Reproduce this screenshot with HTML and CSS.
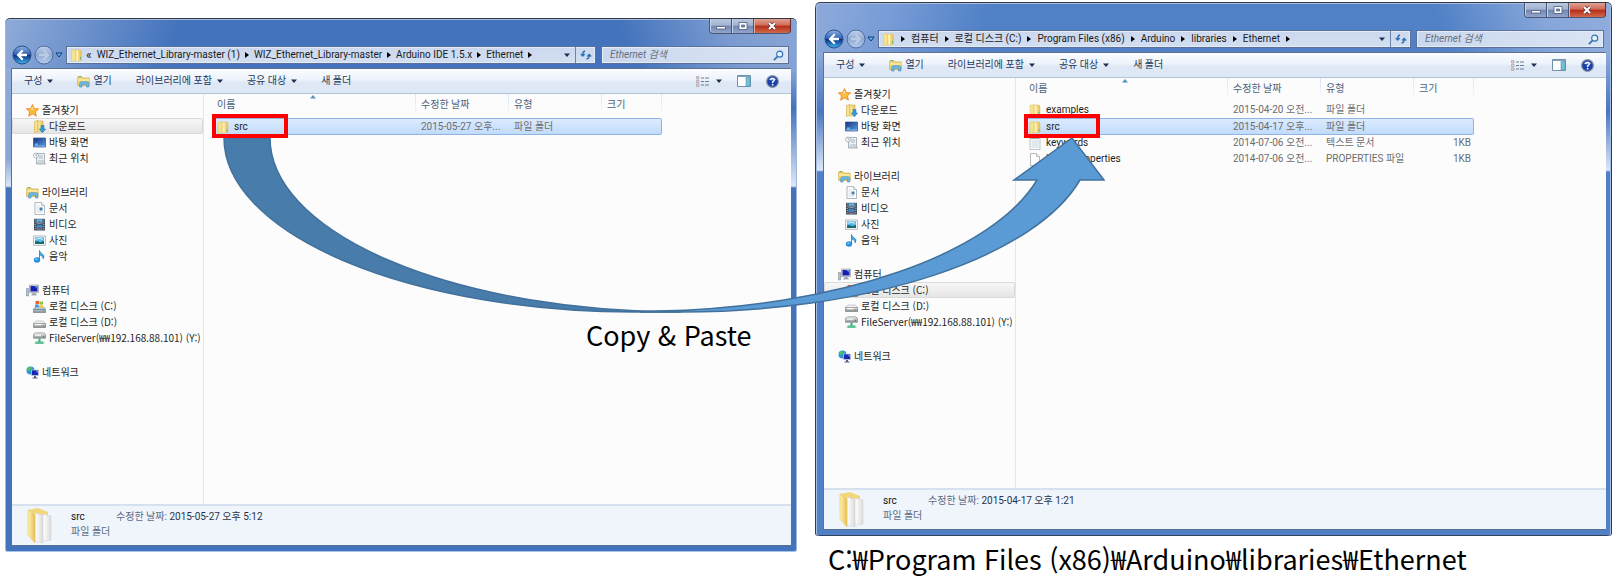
FILE: index.html
```
<!DOCTYPE html>
<html lang="ko">
<head>
<meta charset="utf-8">
<title>Copy &amp; Paste</title>
<link rel="stylesheet" href="styles.css">
</head>
<body>
<svg class="defs" width="0" height="0" aria-hidden="true">
  <defs>
    <linearGradient id="g-folder" x1="0" x2="1"><stop offset="0" stop-color="#fff2b0"/><stop offset="1" stop-color="#e5bf55"/></linearGradient>
    <linearGradient id="g-back" x1="0" x2="0" y1="0" y2="1"><stop offset="0" stop-color="#8fb4e4"/><stop offset=".48" stop-color="#2c5db4"/><stop offset=".52" stop-color="#0b2f88"/><stop offset="1" stop-color="#3fb8f0"/></linearGradient>
    <linearGradient id="g-fwd" x1="0" x2="0" y1="0" y2="1"><stop offset="0" stop-color="#c3d2ec"/><stop offset=".5" stop-color="#8ea9d2"/><stop offset="1" stop-color="#b4cbec"/></linearGradient>
    <linearGradient id="g-screen" x1="0" x2="1" y1="0" y2="1"><stop offset="0" stop-color="#16327c"/><stop offset="1" stop-color="#5b9be8"/></linearGradient>
    <linearGradient id="g-disk" x1="0" x2="0" y1="0" y2="1"><stop offset="0" stop-color="#f2f2f2"/><stop offset="1" stop-color="#8b8f92"/></linearGradient>
    <linearGradient id="g-paper" x1="0" x2="1"><stop offset="0" stop-color="#fff"/><stop offset="1" stop-color="#dcdcdc"/></linearGradient>
  </defs>
  <symbol id="folder" viewBox="0 0 12 13"><path d="M1 1.500 5 .5v11L1 12.500z" fill="#f8e391" stroke="#dcbf62" stroke-width=".5"/><path d="M5 1h5l1 1v9.500l-6 .5z" fill="url(#g-folder)" stroke="#dcbf62" stroke-width=".5"/><path d="M7 2v9.500" stroke="#fff6cc"/><path d="M10 8v2.500" stroke="#58a87f" stroke-width=".8"/></symbol>
  <symbol id="star" viewBox="0 0 13 13"><path d="m6.500.5 1.800 4 4.400.4-3.300 2.900 1 4.400-3.900-2.300-3.900 2.300 1-4.400L.3 4.900l4.400-.4z" fill="#fdbb3a" stroke="#e8822a" stroke-width=".8"/><path d="m6.500 2.500 1 3-3-.1z" fill="#ffe69a"/></symbol>
  <symbol id="download" viewBox="0 0 13 13"><path d="M1.500 1.500 5 .5v11l-3.500 1z" fill="#f8e391" stroke="#cfa93f" stroke-width=".6"/><path d="M5 1h5v11H5z" fill="url(#g-folder)" stroke="#d3ae4a" stroke-width=".6"/><path d="M8 5.500h3V9h1.700l-3.200 3.700L6.300 9H8z" fill="#2f9be0" stroke="#1c6fb5" stroke-width=".5"/></symbol>
  <symbol id="desktop" viewBox="0 0 13 13"><path d="M.5 2h12v9H.5z" fill="url(#g-screen)" stroke="#31508e" stroke-width=".7"/><path d="M1 10h11" stroke="#8cb9ee"/><path d="M2 7.500h3v2H2z" fill="#4fc2e8"/></symbol>
  <symbol id="recent" viewBox="0 0 13 13"><path d="M3.500 1.500h8v9l1 1.500h-9z" fill="#eef2f5" stroke="#8b979f" stroke-width=".7"/><path d="M6 4h4M6 6h4M5 9h6M4 11h8" stroke="#9fb0ba" stroke-width=".9"/><circle cx="3" cy="3.500" r="2.500" fill="#fff" stroke="#8d9ba5" stroke-width=".7"/><path d="M3 2v1.600h1.200" fill="none" stroke="#5a6b77" stroke-width=".6"/></symbol>
  <symbol id="library" viewBox="0 0 13 13"><path d="M.7 2h4l1 1h6.500v7.500H.7z" fill="#f4d978" stroke="#cfa848" stroke-width=".7"/><path d="M1.500 1.500h3" stroke="#75b957"/><path d="M1 5h11.500" stroke="#fff3bd"/><path d="M2.700 12V8.500q0-1.800 1.800-1.800h5.500q1.800 0 1.800 1.800V12h-2.300V9.300H5V12z" fill="#6dbbe5" stroke="#3b89bd" stroke-width=".6"/></symbol>
  <symbol id="doc" viewBox="0 0 13 13"><path d="M2 .6h6.500l3 3v8.900H2z" fill="#fff" stroke="#8d99a3" stroke-width=".7"/><path d="M8.500.6v3h3" fill="#dfe6ec" stroke="#8d99a3" stroke-width=".5"/><path d="M3.500 4h3M3.500 6h2M3.500 8h2M3.500 10h6" stroke="#b7c6d3" stroke-width=".7"/><path d="M6.500 5.500h3v3h-3z" fill="#3a82b8"/></symbol>
  <symbol id="video" viewBox="0 0 13 13"><path d="M1 .8h11v11.700H1z" fill="#3b4650"/><path d="M3.500 1.200h6v5h-6z" fill="#5fb0e4"/><path d="M3.500 7h6v5h-6z" fill="#3c8bc8"/><path d="M3.500 5h2l1-1.500 1 1.500h2M3.500 11h2l1-2 1 2h2" stroke="#9c4a35" fill="none"/><path d="M2.200 1.500v10.500M10.800 1.500v10.500" stroke="#dde5ea" stroke-dasharray="1 1.200" stroke-width=".9"/></symbol>
  <symbol id="picture" viewBox="0 0 13 13"><path d="M.6 2h11.800v9.300H.6z" fill="#fff" stroke="#8f9aa3" stroke-width=".7"/><path d="M2 3.300h9V10H2z" fill="#58b8ec"/><path d="M2 10V7.500l2.500-.5L7 8.300l4-1.300V10z" fill="#17696c"/><path d="M2.500 5.500 6 4.300l4 1" stroke="#d8f1fb" fill="none"/></symbol>
  <symbol id="music" viewBox="0 0 13 13"><ellipse cx="4" cy="10" rx="3.200" ry="2.700" fill="#2792dd"/><ellipse cx="3.400" cy="9.300" rx="1.300" ry=".8" fill="#8ad4f7"/><path d="M6.500 10V.5q.3 2.200 2.600 3.300 3 1.500 1.200 5 0-3-3.100-3.600" fill="#4bb0ea" stroke="#1e7fca" stroke-width=".8"/></symbol>
  <symbol id="computer" viewBox="0 0 13 13"><path d="M.5 4.500h2V12h-2z" fill="#b9c3cb" stroke="#6e7c87" stroke-width=".5"/><path d="M3.500 1h9v7.700h-9z" fill="#d5dbe0" stroke="#8a949d" stroke-width=".6"/><path d="M4.500 2h7v5.500h-7z" fill="#1620b0"/><path d="M8 2h3.500v3z" fill="#5b86ec"/><path d="M6.500 9h3l1.500 2.500H5z" fill="#a3abb3"/></symbol>
  <symbol id="disk-c" viewBox="0 0 13 13"><path d="M2.500 7h8l2 2v3.500H.5V9z" fill="url(#g-disk)" stroke="#66717b" stroke-width=".6"/><path d="M1 9.300h11" stroke="#4e87ac"/><path d="M2.500 1.200Q4.500.2 6 1.200v3Q4.300 3.300 2.500 4.200z" fill="#ee5b2b"/><path d="M6.500 1.300q1.700.9 3.500 0v3q-1.700.9-3.500 0z" fill="#8bc63f"/><path d="M2 4.700q2-.9 3.700 0v2.800q-1.700-.9-3.700 0z" fill="#3d95dc"/><path d="M6.200 4.800q1.700.9 3.500 0v2.800q-1.700.9-3.500 0z" fill="#fcc62f"/><circle cx="10.500" cy="11" r=".8" fill="#47c24e"/></symbol>
  <symbol id="disk" viewBox="0 0 13 13"><path d="M3 5h7l2.500 2.500v4H.5v-4z" fill="#f1f1f1" stroke="#9b9fa2" stroke-width=".5"/><path d="M.7 7.500h11.800v3.800H.7z" fill="url(#g-disk)" stroke="#6c7073" stroke-width=".6"/><path d="M2 8.500h6" stroke="#fff"/><circle cx="10.500" cy="9.700" r=".8" fill="#3fb648"/></symbol>
  <symbol id="netdisk" viewBox="0 0 13 13"><path d="M2.500.8h8l2 1.500v4H.5v-4z" fill="url(#g-disk)" stroke="#777d82" stroke-width=".6"/><path d="M2 3.200h6" stroke="#fff"/><circle cx="10.500" cy="4.500" r=".8" fill="#2d9a36"/><path d="M5.500 6.500h2v3h3V12h-8V9.500h3z" fill="#35b27c"/><path d="M1 11h11" stroke="#a9d8c6" stroke-width=".8"/></symbol>
  <symbol id="network" viewBox="0 0 13 13"><circle cx="4.500" cy="4.500" r="4" fill="#2b92dc"/><path d="M2 1.500q3-1 4 .5L4 4.500 1 5zM4 6l3-.5v2.500z" fill="#51c35a"/><path d="M5.500 4h7v5.500h-7z" fill="#1825b5" stroke="#c5ced7" stroke-width=".7"/><path d="M9 4.300h3v3z" fill="#5b86ec"/><path d="M8 10h2v1.500h1.500v1h-5v-1H8z" fill="#55627c"/></symbol>
  <symbol id="text-file" viewBox="0 0 12 13"><path d="M1 1h10v11.500H1z" fill="#f8fbfc" stroke="#a3adb3" stroke-width=".7"/><path d="M2.500 4h7M2.500 6h7M2.500 8h7M2.500 10h7" stroke="#bad0d8" stroke-width=".8"/><path d="M2 1.500h8" stroke="#98a5ad"/></symbol>
  <symbol id="blank-file" viewBox="0 0 12 13"><path d="M1.500.6h6l3 3v8.900h-9z" fill="#fff" stroke="#979da1" stroke-width=".7"/><path d="M7.500.6v3h3" fill="#eee" stroke="#979da1" stroke-width=".6"/></symbol>
  <symbol id="big-folder" viewBox="0 0 28 36"><path d="M2 2 12 0l10 4v26l-13 3z" fill="#f1d77c"/><path d="m9 5 8 2v28l-8-2z" fill="url(#g-paper)" stroke="#cfcfcf" stroke-width=".5"/><path d="m17 6 8 2v24l-6 1-2-1z" fill="url(#g-paper)" stroke="#cfcfcf" stroke-width=".5"/><path d="m2 2 7 5v28l-7-8z" fill="url(#g-folder)" stroke="#e3c25e" stroke-width=".5"/></symbol>
  <symbol id="back" viewBox="0 0 20 20"><circle cx="10" cy="10" r="9" fill="url(#g-back)" stroke="#254b87"/><path d="M10 4.500 4.500 10l5.500 5.500 1.500-1.500-2.500-2.700h6V8.700H9L11.500 6z" fill="#fff"/></symbol>
  <symbol id="forward" viewBox="0 0 20 20"><circle cx="10" cy="10" r="9" fill="url(#g-fwd)" stroke="#4d6da2"/><path d="m10 4.500 5.500 5.500-5.500 5.500L8.500 14l2.500-2.700H5V8.700h6L8.500 6z" fill="#bccbe4"/></symbol>
  <symbol id="history" viewBox="0 0 8 6"><path d="M1 1h6L4 5z" fill="#6db8ee" stroke="#0f3878"/></symbol>
  <symbol id="caret" viewBox="0 0 6 4"><path d="M0 .5h6L3 4z" fill="currentColor"/></symbol>
  <symbol id="crumb" viewBox="0 0 4 6"><path d="M0 0v6l4-3z" fill="#000"/></symbol>
  <symbol id="refresh" viewBox="0 0 12 12"><path d="M5 2Q2.500 2.500 2.700 6M.8 5l1.900 2 2-2M6.500 10q3-.5 2.700-4M7.200 7.500l2-2 2 2" fill="none" stroke="#2d71b5" stroke-width="1.300"/></symbol>
  <symbol id="magnifier" viewBox="0 0 12 12"><circle cx="7.300" cy="4.500" r="3.300" fill="#e9f3fd" stroke="#2e70b4" stroke-width="1.200"/><path d="m5 7-4 4" stroke="#2e70b4" stroke-width="1.800"/></symbol>
  <symbol id="view" viewBox="0 0 13 11"><path d="M.5.500h2.500v2.500H.5zM.5 4.300h2.500v2.500H.5zM.5 8h2.500v2.500H.5z" fill="#efc9c2" stroke="#a8a4ae" stroke-width=".7"/><path d="M5 2h3M9 2h4M5 5.500h3M9 5.500h4M5 9h3M9 9h4" stroke="#6d7f95"/></symbol>
  <symbol id="pane" viewBox="0 0 14 12"><path d="M.5.500h13v11H.5z" fill="#fff" stroke="#6f93ab"/><path d="M1 1.500h12" stroke="#7fa3ba"/><path d="M9 2.500h4V11H9z" fill="#74c2d9" stroke="#4a91ad" stroke-width=".6"/></symbol>
  <symbol id="help" viewBox="0 0 13 13"><circle cx="6.500" cy="6.500" r="5.900" fill="#1b3fa8" stroke="#8f98a5" stroke-width="1.200"/><path d="M2.500 4.500q4-4 8 0-4 2-8 0z" fill="#7f9fe4"/><path d="M4.700 5Q4.800 3.400 6.500 3.400T8.300 5Q8.300 6 6.600 7v1" fill="none" stroke="#fff" stroke-width="1.400"/><circle cx="6.600" cy="9.700" r=".9" fill="#fff"/></symbol>
  <symbol id="minimize" viewBox="0 0 12 10"><path d="M1.500 5.500h9v2.500h-9z" fill="#fff" stroke="#49587a" stroke-width=".8"/></symbol>
  <symbol id="maximize" viewBox="0 0 12 10"><path d="M2 1.500h8v7H2z" fill="#fff" stroke="#49587a" stroke-width=".8"/><path d="M4.500 4h3v2h-3z" fill="#7d8fb4" stroke="#49587a" stroke-width=".7"/></symbol>
  <symbol id="close" viewBox="0 0 12 10"><path d="m3 2 6 6M9 2 3 8" stroke="#5c3034" stroke-width="3.200"/><path d="m3 2 6 6M9 2 3 8" stroke="#fff" stroke-width="2"/></symbol>
</svg>

<main class="scene">
  <div class="column column-source">
    <section class="window window-source" aria-label="Ethernet">
      <div class="controls">
        <button class="control" aria-label="최소화"><svg><use href="#minimize"/></svg></button><button class="control" aria-label="최대화"><svg><use href="#maximize"/></svg></button><button class="control control-close" aria-label="닫기"><svg><use href="#close"/></svg></button>
      </div>
      <div class="navbar">
        <div class="history"><button class="round" aria-label="뒤로"><svg><use href="#back"/></svg></button><button class="round" aria-label="앞으로"><svg><use href="#forward"/></svg></button><button class="recent" aria-label="최근 페이지"><svg><use href="#history"/></svg></button></div>
        <nav class="address" aria-label="주소">
          <svg class="icon"><use href="#folder"/></svg>
          <span class="overflow">«</span>
          <a href="#">WIZ_Ethernet_Library-master (1)</a><svg class="crumb"><use href="#crumb"/></svg>
          <a href="#">WIZ_Ethernet_Library-master</a><svg class="crumb"><use href="#crumb"/></svg>
          <a href="#">Arduino IDE 1.5.x</a><svg class="crumb"><use href="#crumb"/></svg>
          <a href="#">Ethernet</a><svg class="crumb"><use href="#crumb"/></svg>
          <button class="drop" aria-label="이전 위치"><svg class="caret"><use href="#caret"/></svg></button>
          <button class="refresh" aria-label="새로 고침"><svg><use href="#refresh"/></svg></button>
        </nav>
        <label class="search"><input type="text" placeholder="Ethernet 검색" aria-label="Ethernet 검색"><svg><use href="#magnifier"/></svg></label>
      </div>
      <div class="content">
        <div class="toolbar">
          <button>구성<svg class="caret"><use href="#caret"/></svg></button>
          <button><svg class="icon"><use href="#library"/></svg>열기</button>
          <button>라이브러리에 포함<svg class="caret"><use href="#caret"/></svg></button>
          <button>공유 대상<svg class="caret"><use href="#caret"/></svg></button>
          <button>새 폴더</button>
          <span class="tools"><button aria-label="보기"><svg class="view"><use href="#view"/></svg><svg class="caret"><use href="#caret"/></svg></button><button aria-label="미리 보기 창"><svg class="pane"><use href="#pane"/></svg></button><button aria-label="도움말"><svg class="help"><use href="#help"/></svg></button></span>
        </div>
        <div class="body">
          <nav class="tree" aria-label="탐색 창">
            <ul><li><a href="#"><svg class="icon"><use href="#star"/></svg>즐겨찾기</a></li>
              <li class="child current"><a href="#"><svg class="icon"><use href="#download"/></svg>다운로드</a></li>
              <li class="child"><a href="#"><svg class="icon"><use href="#desktop"/></svg>바탕 화면</a></li>
              <li class="child"><a href="#"><svg class="icon"><use href="#recent"/></svg>최근 위치</a></li></ul>
            <ul><li><a href="#"><svg class="icon"><use href="#library"/></svg>라이브러리</a></li>
              <li class="child"><a href="#"><svg class="icon"><use href="#doc"/></svg>문서</a></li>
              <li class="child"><a href="#"><svg class="icon"><use href="#video"/></svg>비디오</a></li>
              <li class="child"><a href="#"><svg class="icon"><use href="#picture"/></svg>사진</a></li>
              <li class="child"><a href="#"><svg class="icon"><use href="#music"/></svg>음악</a></li></ul>
            <ul><li><a href="#"><svg class="icon"><use href="#computer"/></svg>컴퓨터</a></li>
              <li class="child"><a href="#"><svg class="icon"><use href="#disk-c"/></svg>로컬 디스크 (C:)</a></li>
              <li class="child"><a href="#"><svg class="icon"><use href="#disk"/></svg>로컬 디스크 (D:)</a></li>
              <li class="child"><a href="#"><svg class="icon"><use href="#netdisk"/></svg>FileServer(₩₩192.168.88.101) (Y:)</a></li></ul>
            <ul><li><a href="#"><svg class="icon"><use href="#network"/></svg>네트워크</a></li></ul>
          </nav>
          <div class="files">
            <table>
              <colgroup><col class="col-name"><col class="col-meta"><col class="col-meta"><col class="col-size"></colgroup>
              <thead><tr><th class="sorted">이름<svg class="caret"><use href="#caret"/></svg></th><th>수정한 날짜</th><th>유형</th><th>크기</th></tr></thead>
              <tbody>
                <tr class="selected"><td class="marked"><svg class="icon"><use href="#folder"/></svg>src</td><td>2015-05-27 오후...</td><td>파일 폴더</td><td></td></tr>
              </tbody>
            </table>
          </div>
        </div>
        <footer class="details">
          <svg class="preview"><use href="#big-folder"/></svg>
          <div class="facts"><p><b>src</b><span>수정한 날짜:</span> 2015-05-27 오후 5:12</p><p class="kind">파일 폴더</p></div>
        </footer>
      </div>
    </section>
  </div>

  <div class="column">
    <section class="window window-target" aria-label="Ethernet">
      <div class="controls">
        <button class="control" aria-label="최소화"><svg><use href="#minimize"/></svg></button><button class="control" aria-label="최대화"><svg><use href="#maximize"/></svg></button><button class="control control-close" aria-label="닫기"><svg><use href="#close"/></svg></button>
      </div>
      <div class="navbar">
        <div class="history"><button class="round" aria-label="뒤로"><svg><use href="#back"/></svg></button><button class="round" aria-label="앞으로"><svg><use href="#forward"/></svg></button><button class="recent" aria-label="최근 페이지"><svg><use href="#history"/></svg></button></div>
        <nav class="address" aria-label="주소">
          <svg class="icon"><use href="#folder"/></svg><svg class="crumb"><use href="#crumb"/></svg>
          <a href="#">컴퓨터</a><svg class="crumb"><use href="#crumb"/></svg>
          <a href="#">로컬 디스크 (C:)</a><svg class="crumb"><use href="#crumb"/></svg>
          <a href="#">Program Files (x86)</a><svg class="crumb"><use href="#crumb"/></svg>
          <a href="#">Arduino</a><svg class="crumb"><use href="#crumb"/></svg>
          <a href="#">libraries</a><svg class="crumb"><use href="#crumb"/></svg>
          <a href="#">Ethernet</a><svg class="crumb"><use href="#crumb"/></svg>
          <button class="drop" aria-label="이전 위치"><svg class="caret"><use href="#caret"/></svg></button>
          <button class="refresh" aria-label="새로 고침"><svg><use href="#refresh"/></svg></button>
        </nav>
        <label class="search"><input type="text" placeholder="Ethernet 검색" aria-label="Ethernet 검색"><svg><use href="#magnifier"/></svg></label>
      </div>
      <div class="content">
        <div class="toolbar">
          <button>구성<svg class="caret"><use href="#caret"/></svg></button>
          <button><svg class="icon"><use href="#library"/></svg>열기</button>
          <button>라이브러리에 포함<svg class="caret"><use href="#caret"/></svg></button>
          <button>공유 대상<svg class="caret"><use href="#caret"/></svg></button>
          <button>새 폴더</button>
          <span class="tools"><button aria-label="보기"><svg class="view"><use href="#view"/></svg><svg class="caret"><use href="#caret"/></svg></button><button aria-label="미리 보기 창"><svg class="pane"><use href="#pane"/></svg></button><button aria-label="도움말"><svg class="help"><use href="#help"/></svg></button></span>
        </div>
        <div class="body">
          <nav class="tree" aria-label="탐색 창">
            <ul><li><a href="#"><svg class="icon"><use href="#star"/></svg>즐겨찾기</a></li>
              <li class="child"><a href="#"><svg class="icon"><use href="#download"/></svg>다운로드</a></li>
              <li class="child"><a href="#"><svg class="icon"><use href="#desktop"/></svg>바탕 화면</a></li>
              <li class="child"><a href="#"><svg class="icon"><use href="#recent"/></svg>최근 위치</a></li></ul>
            <ul><li><a href="#"><svg class="icon"><use href="#library"/></svg>라이브러리</a></li>
              <li class="child"><a href="#"><svg class="icon"><use href="#doc"/></svg>문서</a></li>
              <li class="child"><a href="#"><svg class="icon"><use href="#video"/></svg>비디오</a></li>
              <li class="child"><a href="#"><svg class="icon"><use href="#picture"/></svg>사진</a></li>
              <li class="child"><a href="#"><svg class="icon"><use href="#music"/></svg>음악</a></li></ul>
            <ul><li><a href="#"><svg class="icon"><use href="#computer"/></svg>컴퓨터</a></li>
              <li class="child current"><a href="#"><svg class="icon"><use href="#disk-c"/></svg>로컬 디스크 (C:)</a></li>
              <li class="child"><a href="#"><svg class="icon"><use href="#disk"/></svg>로컬 디스크 (D:)</a></li>
              <li class="child"><a href="#"><svg class="icon"><use href="#netdisk"/></svg>FileServer(₩₩192.168.88.101) (Y:)</a></li></ul>
            <ul><li><a href="#"><svg class="icon"><use href="#network"/></svg>네트워크</a></li></ul>
          </nav>
          <div class="files">
            <table>
              <colgroup><col class="col-name"><col class="col-meta"><col class="col-meta"><col class="col-size"></colgroup>
              <thead><tr><th class="sorted">이름<svg class="caret"><use href="#caret"/></svg></th><th>수정한 날짜</th><th>유형</th><th>크기</th></tr></thead>
              <tbody>
                <tr><td><svg class="icon"><use href="#folder"/></svg>examples</td><td>2015-04-20 오전...</td><td>파일 폴더</td><td></td></tr>
                <tr class="selected"><td class="marked"><svg class="icon"><use href="#folder"/></svg>src</td><td>2015-04-17 오후...</td><td>파일 폴더</td><td></td></tr>
                <tr><td><svg class="icon"><use href="#text-file"/></svg>keywords</td><td>2014-07-06 오전...</td><td>텍스트 문서</td><td class="size">1KB</td></tr>
                <tr><td><svg class="icon"><use href="#blank-file"/></svg>library.properties</td><td>2014-07-06 오전...</td><td>PROPERTIES 파일</td><td class="size">1KB</td></tr>
              </tbody>
            </table>
          </div>
        </div>
        <footer class="details">
          <svg class="preview"><use href="#big-folder"/></svg>
          <div class="facts"><p><b>src</b><span>수정한 날짜:</span> 2015-04-17 오후 1:21</p><p class="kind">파일 폴더</p></div>
        </footer>
      </div>
    </section>
    <p class="caption path">C:₩Program Files (x86)₩Arduino₩libraries₩Ethernet</p>
  </div>

  <svg class="arrow" viewBox="0 0 1612 585" preserveAspectRatio="none" aria-hidden="true">
    <path class="arrow-head" d="M640 312H681A411 174 0 0 0 1080 180H1104L1072 138 1014 180H1037A411 174 0 0 1 658 311Z"/>
    <path class="arrow-tail" d="M224 138A411 174 0 0 0 635 312H681A411 174 0 0 1 270 138Z"/>
  </svg>
  <p class="caption action">Copy &amp; Paste</p>
</main>
</body>
</html>
```
FILE: styles.css
```
* { box-sizing: border-box; }

body {
  margin: 0;
  background: #fff;
  color: #1e1e1e;
  font: 10px/16px Roboto, "Noto Sans CJK KR", sans-serif;
}

svg { display: block; flex: none; }
p, ul { margin: 0; padding: 0; list-style: none; }
a { color: inherit; text-decoration: none; }
.defs { position: absolute; }

button {
  display: flex;
  flex: none;
  align-items: center;
  padding: 0;
  border: 0;
  background: none;
  color: inherit;
  font: inherit;
}

.icon { width: 13px; height: 13px; }
.caret { width: 6px; height: 4px; color: #1d2f52; }

.scene {
  position: relative;
  display: flex;
  gap: 18px;
  min-height: 585px;
  padding-left: 5px;
  overflow: hidden;
}

.column { flex: 797 1 0; min-width: 0; padding-top: 2px; }
.column-source { flex-grow: 792; padding-top: 18px; }

/* Explorer window */
.window {
  position: relative;
  padding: 0 6px 6px;
  border-radius: 5px 5px 3px 3px;
  box-shadow: inset 0 1px #333b49, inset 0 2px #a6bde2, inset 1px 0 #9fb7df, inset -1px 0 #9fb7df, inset 0 -1px #a9c2e8;
}

.window-source {
  background:
    linear-gradient(105deg, #8fabd8 0, #6c91cc 80px, transparent 170px) 0 0 / 100% 50px no-repeat,
    linear-gradient(250deg, #88a5d5 0, #7b9bd0 70px, transparent 170px) 100% 0 / 50% 50px no-repeat,
    linear-gradient(#8eabd9 0, #87a5d6 90px, #dce7f8 118px, transparent 120px) 0 50px / 6px 120px no-repeat,
    linear-gradient(#87a5d6 0, #4373bc 40px, #dce7f8 118px, transparent 120px) 100% 50px / 6px 120px no-repeat,
    #4373bc;
}

.window-target {
  padding: 0 6px 6px 8px;
  box-shadow: inset 0 1px #333b49, inset 0 2px #a6bde2, inset 1px 0 #2e3a50, inset 2px 0 #a8bfe5, inset -1px 0 #2e3a50, inset -2px 0 #a8bfe5, inset 0 -1px #33415c;
  background:
    linear-gradient(105deg, #8faadb 0, #769bd6 80px, transparent 170px) 0 0 / 100% 50px no-repeat,
    linear-gradient(250deg, #91addd 0, #86a6da 70px, transparent 170px) 100% 0 / 50% 50px no-repeat,
    linear-gradient(#8eabd9 0, #4a76bf 60px, #dce7f8 118px, transparent 120px) 0 50px / 8px 120px no-repeat,
    linear-gradient(#8eabd9 0, #4a76bf 60px, #dce7f8 118px, transparent 120px) 100% 50px / 6px 120px no-repeat,
    #5080c6;
}

.controls {
  display: flex;
  justify-content: flex-end;
  height: 28px;
  padding-top: 1px;
}

.control {
  justify-content: center;
  width: 22px;
  height: 15px;
  border: 1px solid #465777;
  border-top: 0;
  border-right: 0;
  background: linear-gradient(#b9c7df 0, #a3b4d2 45%, #7287b0 50%, #91a6cd 100%);
  box-shadow: inset 1px 0 #c6d3e8;
}
.control:first-child { border-radius: 0 0 0 4px; }
.control svg { width: 12px; height: 10px; }
.control-close {
  width: 38px;
  border-right: 1px solid #6b2c31;
  border-radius: 0 0 4px 0;
  background: linear-gradient(#e0a193 0, #cf6a57 45%, #b32c17 50%, #d2694a 100%);
  box-shadow: inset 1px 0 #e8b1a5;
}

.navbar {
  display: flex;
  align-items: flex-start;
  gap: 5px;
  height: 22px;
  padding-right: 2px;
}

.history { display: flex; align-items: center; width: 50px; height: 18px; gap: 1px; }
.history .round svg { width: 20px; height: 20px; }
.round { margin-left: 1px; }
.recent svg { width: 8px; height: 6px; }

.address {
  display: flex;
  flex: 1;
  align-items: center;
  min-width: 0;
  height: 18px;
  padding-left: 3px;
  border: 1px solid #5b7199;
  background: linear-gradient(#cbd8ee, #d3def1);
  box-shadow: inset 0 0 0 1px #e4ecf8;
  color: #1a1a1a;
  white-space: nowrap;
}
.address .overflow { margin: 0 5px 0 3px; font-size: 12px; }
.crumb { width: 4px; height: 6px; margin: 0 6px; }
.window-source .crumb { margin: 0 5px; }
.drop { height: 16px; margin-left: auto; padding: 0 5px; }
.refresh { justify-content: center; width: 20px; height: 16px; border-left: 1px solid #6d82a8; }
.refresh svg { width: 12px; height: 12px; }

.search {
  display: flex;
  align-items: center;
  width: 188px;
  height: 18px;
  padding: 0 4px 0 8px;
  border: 1px solid #5b7199;
  background: linear-gradient(90deg, #cad7ed, #dae4f4);
  box-shadow: inset 0 0 0 1px #e4ecf8;
}
.search input {
  flex: 1;
  min-width: 0;
  padding: 0;
  border: 0;
  outline: 0;
  background: none;
  font: italic 10px/16px Roboto, "Noto Sans CJK KR", sans-serif;
}
.search input::placeholder { color: #66707e; opacity: 1; }
.search svg { width: 11px; height: 11px; }

.content {
  border: 1px solid #5c7090;
  border-width: 1px 0 1px 1px;
  background: #fcfcfc;
}

.toolbar {
  display: flex;
  align-items: center;
  height: 25px;
  padding: 0 12px;
  border-bottom: 1px solid #b3c4da;
  background: linear-gradient(#fbfdff 0, #edf3fb 45%, #dfe8f5 55%, #dde7f5 100%);
  color: #24395c;
  white-space: nowrap;
}
.toolbar > button { margin-right: 24px; }
.toolbar > button .caret { margin-left: 5px; }
.toolbar .icon { margin-right: 3px; }
.tools { display: flex; align-items: center; gap: 15px; margin-left: auto; }
.view { width: 13px; height: 11px; margin-right: 7px; }
.pane { width: 14px; height: 12px; }
.tools .help { width: 13px; height: 13px; }

.body { display: flex; min-height: 410px; }

.tree {
  width: 192px;
  padding-top: 8px;
  border-right: 1px solid #dde7f3;
  font-family: "Noto Sans CJK KR", sans-serif;
  white-space: nowrap;
}
.tree ul { margin-bottom: 18px; }
.tree a { display: flex; align-items: center; gap: 3px; height: 16px; padding-left: 14px; }
.tree .child a { padding-left: 21px; }
.tree .current a {
  border-radius: 2px;
  background: linear-gradient(#f8f8f8, #e4e4e4);
  box-shadow: inset 0 0 0 1px #dadada;
}

.files { flex: 1; min-width: 0; padding-left: 8px; }
.files table { width: 450px; border-collapse: separate; border-spacing: 0; table-layout: fixed; }
.col-name { width: 204px; }
.col-meta { width: 93px; }
.col-size { width: 60px; }
.files th, .files td {
  padding: 0 0 0 5px;
  font-weight: 400;
  text-align: left;
  white-space: nowrap;
}
.files th {
  height: 24px;
  padding-bottom: 3px;
  color: #4c607a;
  background: linear-gradient(#d8e5f3, #f4f8fc) 100% 0 / 1px 18px no-repeat;
}
.files td { height: 16px; line-height: 16px; color: #6d6d6d; }
.files td:first-child { color: #1e1e1e; }
.files td .icon { display: inline-block; width: 12px; margin-right: 5px; vertical-align: middle; }
.files .size { padding-right: 3px; text-align: right; }
.sorted { position: relative; }
.sorted .caret { position: absolute; top: 1px; left: 48%; color: #5b93b8; transform: rotate(180deg); }

.files .selected td {
  height: 17px;
  border: 1px solid #8fb3e3;
  border-width: 1px 0;
  line-height: 15px;
  background: linear-gradient(#dcebfd, #c1dbfc);
}
.files .selected td:last-child { border-right-width: 1px; border-radius: 0 2px 2px 0; }
.marked { position: relative; }
.marked::after {
  content: "";
  position: absolute;
  z-index: 3;
  top: -5px;
  left: 0;
  width: 68px;
  height: 16px;
  border: 4px solid #f00;
}

.details {
  display: flex;
  gap: 17px;
  height: 41px;
  padding: 2px 0 0 14px;
  border-top: 2px solid #d5e1ef;
  background: #f0f4fb;
  color: #25344d;
}
.facts { padding-top: 1px; }
.preview { width: 28px; height: 36px; }
.details b { display: inline-block; width: 45px; font-weight: 400; color: #111; }
.details span, .kind { color: #5a6b84; }
.details p { line-height: 15px; }

/* Annotations lying over the windows */
.arrow {
  position: absolute;
  z-index: 2;
  top: 0;
  left: 0;
  width: 100%;
  height: 585px;
  pointer-events: none;
}
.arrow path { stroke: #41719c; stroke-width: 1.5; }
.arrow-head { fill: #5b9bd5; }
.arrow-tail { fill: #487caa; }

.caption { color: #000; font: 27px/36px "Noto Sans CJK KR", sans-serif; white-space: nowrap; }
.path { padding: 5px 0 0 13px; }
.action { position: absolute; z-index: 2; top: 317px; left: 586px; }
```
